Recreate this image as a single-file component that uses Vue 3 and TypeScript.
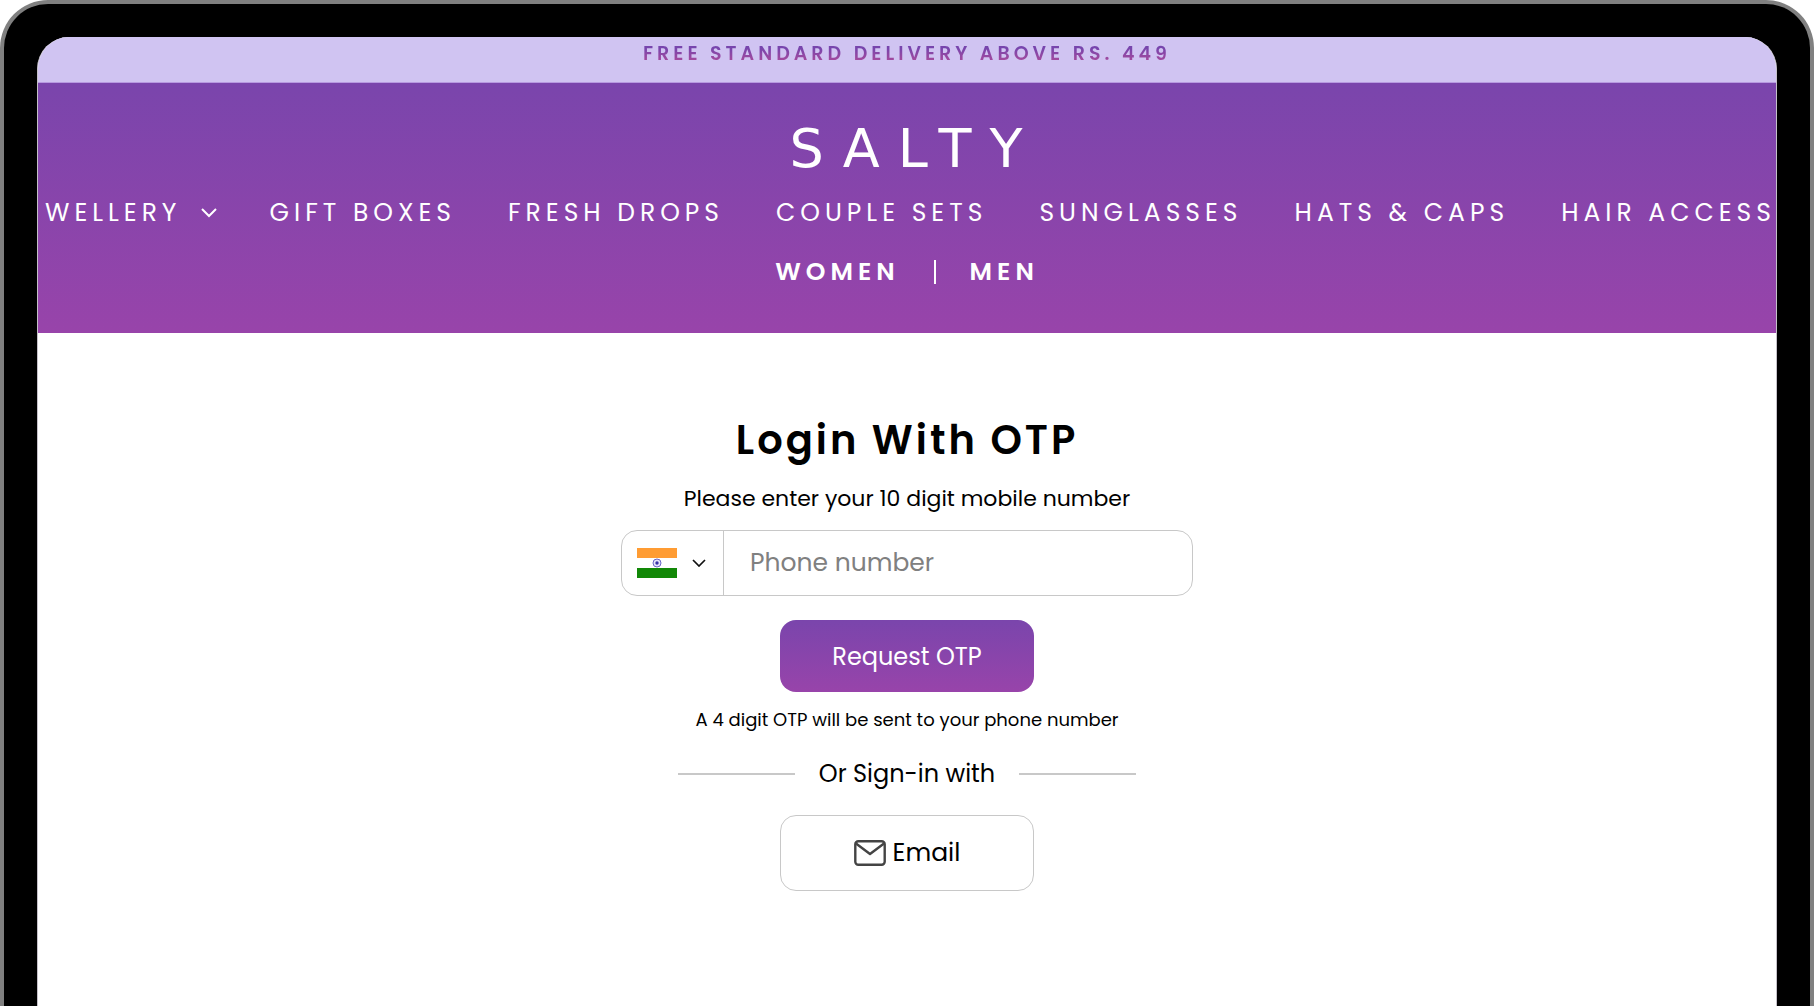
<script setup lang="ts">
import { ref } from 'vue'

interface NavItem {
  label: string
  hasMenu?: boolean
}

const navItems: NavItem[] = [
  { label: 'WELLERY', hasMenu: true },
  { label: 'GIFT BOXES' },
  { label: 'FRESH DROPS' },
  { label: 'COUPLE SETS' },
  { label: 'SUNGLASSES' },
  { label: 'HATS & CAPS' },
  { label: 'HAIR ACCESS' },
]

const country = ref('IN')
const phone = ref('')
</script>

<template>
  <div class="device">
    <div class="screen">
      <p class="promo"><span>FREE STANDARD DELIVERY ABOVE RS. 449</span></p>

      <header class="header">
        <a href="#" class="logo">SALTY</a>
        <nav class="nav">
          <a v-for="item in navItems" :key="item.label" href="#" class="nav-link">
            {{ item.label }}
            <svg v-if="item.hasMenu" class="nav-chevron" viewBox="0 0 16 10" aria-hidden="true">
              <path d="M1 1l7 7 7-7" />
            </svg>
          </a>
        </nav>
        <nav class="audience">
          <a href="#">WOMEN</a>
          <span class="audience-bar"></span>
          <a href="#">MEN</a>
        </nav>
      </header>

      <main class="login">
        <h1>Login With OTP</h1>
        <label for="phone" class="hint">Please enter your 10 digit mobile number</label>

        <form class="form" @submit.prevent>
          <div class="phone-field">
            <div class="country">
              <svg class="flag" viewBox="0 0 40 30" aria-hidden="true">
                <rect width="40" height="30" fill="#fff" />
                <rect width="40" height="10" fill="#ff9c33" />
                <rect y="20" width="40" height="10" fill="#128807" />
                <circle cx="20" cy="15" r="4" fill="#e4e2fa" stroke="#6a66c8" stroke-width="1" />
                <circle cx="20" cy="15" r="1.7" fill="#3832a8" />
              </svg>
              <svg class="country-chevron" viewBox="0 0 14 8" aria-hidden="true">
                <path d="M1 1l6 6 6-6" />
              </svg>
              <select v-model="country" aria-label="Country">
                <option value="IN"></option>
              </select>
            </div>
            <input id="phone" v-model="phone" type="tel" placeholder="Phone number" />
          </div>
          <button type="submit" class="request">Request OTP</button>
        </form>

        <p class="note">A 4 digit OTP will be sent to your phone number</p>
        <div class="divider"><span>Or Sign-in with</span></div>

        <button type="button" class="email">
          <svg viewBox="0 0 32 26" aria-hidden="true">
            <rect x="1.3" y="1.3" width="29.4" height="23.4" rx="3" />
            <path d="M2 3.5l14 10.5 14-10.5" />
          </svg>
          Email
        </button>
      </main>
    </div>
  </div>
</template>

<style>
body {
  margin: 0;
  background: #fff;
}
</style>

<style scoped>
* {
  box-sizing: border-box;
}

.device {
  min-height: 100vh;
  padding: 33px 33px 0;
  border: 4px solid #808080;
  border-bottom: 0;
  border-radius: 48px 48px 0 0;
  background: #000;
  font-family: Poppins, Inter, sans-serif;
  color: #000;
  display: flex;
}

.screen {
  flex: 1;
  min-width: 0;
  overflow: hidden;
  border: 1px solid #c4c0c8;
  border-width: 0 1px;
  border-radius: 32px 32px 0 0;
  background: #fff;
}

.promo {
  height: 46px;
  margin: 0;
  border-bottom: 1px solid #b79ae0;
  background: #d0c4f2;
  font-size: 19px;
  font-weight: 600;
  line-height: 34px;
  letter-spacing: 4px;
  text-align: center;
}

.promo span {
  background: linear-gradient(#7745ad 30%, #a84a9c 80%);
  background-clip: text;
  color: transparent;
}

a {
  color: #fff;
  text-decoration: none;
}

.header {
  display: flex;
  flex-direction: column;
  align-items: center;
  height: 250px;
  padding-top: 34px;
  background: linear-gradient(#7a45ac, #9844aa);
  color: #fff;
}

.logo {
  padding-left: 16px;
  font-family: "DejaVu Sans", sans-serif;
  font-size: 54px;
  line-height: 64px;
  letter-spacing: 18px;
}

.nav {
  display: flex;
  justify-content: space-between;
  align-self: stretch;
  padding: 0 0 0 7px;
  font-size: 25px;
  font-weight: 400;
  line-height: 64px;
  letter-spacing: 5px;
  white-space: nowrap;
}

.nav-link {
  display: flex;
  align-items: center;
  gap: 20px;
}

.nav-chevron {
  width: 16px;
  height: 10px;
}

.nav-chevron path {
  fill: none;
  stroke: #fff;
  stroke-width: 2;
}

.audience {
  display: flex;
  align-items: center;
  gap: 34px;
  font-size: 25px;
  font-weight: 600;
  line-height: 54px;
  letter-spacing: 5px;
}

.audience-bar {
  width: 2px;
  height: 24px;
  background: #fff;
}

.login {
  display: flex;
  flex-direction: column;
  align-items: center;
  padding: 75px 24px 64px;
}

h1 {
  margin: 0;
  font-size: 40px;
  font-weight: 600;
  line-height: 64px;
  letter-spacing: 3px;
}

.hint {
  font-size: 22px;
  line-height: 54px;
}

.form {
  display: flex;
  flex-direction: column;
  align-items: center;
  gap: 24px;
  width: 100%;
  padding-top: 4px;
}

.phone-field {
  display: flex;
  width: 100%;
  max-width: 572px;
  height: 66px;
  border: 1px solid #c8c8c8;
  border-radius: 16px;
  overflow: hidden;
}

.country {
  position: relative;
  display: flex;
  align-items: center;
  gap: 15px;
  padding: 0 17px 0 15px;
  border-right: 1px solid #c8c8c8;
}

.country select {
  position: absolute;
  inset: 0;
  width: 100%;
  opacity: 0;
}

.flag {
  width: 40px;
  height: 30px;
}

.country-chevron {
  width: 14px;
  height: 8px;
}

.country-chevron path {
  fill: none;
  stroke: #111;
  stroke-width: 1.7;
}

input {
  flex: 1;
  min-width: 0;
  padding: 0 24px 0 26px;
  border: 0;
  outline: 0;
  background: transparent;
  font: inherit;
  font-size: 25px;
}

input::placeholder {
  color: #808080;
  opacity: 1;
}

button {
  width: 254px;
  border-radius: 16px;
  font: inherit;
}

.request {
  height: 72px;
  border: 0;
  background: linear-gradient(#7a45ac, #9844aa);
  color: #fff;
  font-size: 24px;
}

.note {
  margin: 0;
  font-size: 18px;
  line-height: 56px;
}

.divider {
  display: flex;
  align-items: center;
  gap: 24px;
  width: 100%;
  max-width: 458px;
  font-size: 24px;
  line-height: 52px;
  white-space: nowrap;
}

.divider::before,
.divider::after {
  content: "";
  flex: 1;
  height: 2px;
  background: #c8c8c8;
}

.email {
  display: flex;
  align-items: center;
  justify-content: center;
  gap: 7px;
  height: 76px;
  margin-top: 15px;
  border: 1px solid #c8c8c8;
  background: #fff;
  color: #000;
  font-size: 25px;
}

.email svg {
  width: 32px;
  height: 26px;
  fill: none;
  stroke: #444;
  stroke-width: 2.4;
  stroke-linejoin: round;
}
</style>
